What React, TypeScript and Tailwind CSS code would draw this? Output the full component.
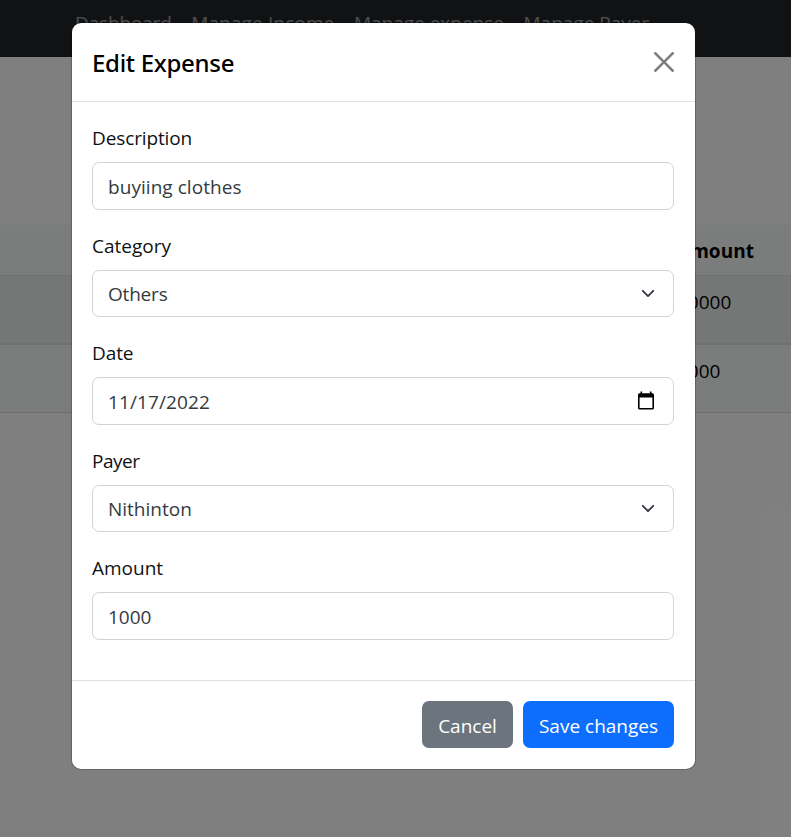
import React from "react";

type FieldProps = {
  label: string;
  labelClass?: string;
  value: string;
  valueClass?: string;
  icon?: React.ReactNode;
};

function ChevronIcon() {
  return (
    <svg className="mr-[3px] h-5 w-[14px]" viewBox="0 0 16 16" fill="none" stroke="#343a40" strokeWidth="2.1" strokeLinecap="round" strokeLinejoin="round">
      <path d="m2 5.500 6 6 6-6" />
    </svg>
  );
}

function CalendarIcon() {
  return (
    <svg className="mr-[4px] h-5 w-4" viewBox="0 0 16 20" fill="#000">
      <path fillRule="evenodd" d="M2.5 .6h1.600v1.600h7.800V.6h1.600v1.600h.9A1.600 1.600 0 0 1 16 3.800v13.200a1.600 1.600 0 0 1-1.600 1.600H1.600A1.600 1.600 0 0 1 0 17V3.800a1.600 1.600 0 0 1 1.600-1.600h.9zM1.600 6.500v10.500h12.800V6.500z" />
    </svg>
  );
}

function Field({ label, labelClass = "", value, valueClass = "", icon }: FieldProps) {
  return (
    <div className="mb-5">
      <div className={`mb-[10px] h-[30px] leading-[32px] text-[#101214] ${labelClass}`}>{label}</div>
      <div className="flex h-[47.5px] items-center justify-between rounded-[7px] border border-[#ced4da] bg-white px-[15px] text-[#343a40]">
        <span className={`pt-[2px] leading-[30px] ${valueClass}`}>{value}</span>
        {icon}
      </div>
    </div>
  );
}

function Page() {
  return (
    <div className="h-[837px] bg-white">
      <nav className="flex h-[57px] gap-[19.5px] bg-[#212529] pl-[75px] pt-[8px] leading-[30px] text-white/55">
        <span className="tracking-[-0.15px]">Dashboard</span>
        <span className="tracking-[0.13px]">Manage Income</span>
        <span>Manage expense</span>
        <span className="tracking-[0px]">Manage Payer</span>
      </nav>
      <div className="pt-[168px] text-black">
        <div className="h-[51px] border-b border-[#dee2e1] bg-[#f7faf9] pl-[677px] pt-[11px] font-bold leading-[30px] tracking-[0.05px]">Amount</div>
        <div className="h-[69px] border-b-2 border-[#dee2e1] bg-[#ebeeed] pl-[677px] pt-[11px] leading-[30px]">10000</div>
        <div className="h-[68px] border-b border-[#d2d5d4] bg-[#f7faf9] pl-[677px] pt-[11px] leading-[30px]">1000</div>
      </div>
    </div>
  );
}

export default function App() {
  return (
    <div className="relative h-[837px] w-[791px] overflow-hidden font-['Open_Sans','Noto_Sans',sans-serif] text-[19px]">
      <Page />
      <div className="absolute inset-0 bg-black/50 pl-[71px] pt-[22px]">
        <div className="w-[625px] overflow-hidden rounded-[10px] border border-black/20 bg-white bg-clip-padding">
          <header className="flex h-[79px] items-center justify-between border-b border-[#dee2e6] pl-5 pr-[21px]">
            <h1 className="font-['Noto_Sans',sans-serif] text-[24px] font-medium leading-[37px] tracking-[-0.3px] text-black">Edit Expense</h1>
            <svg className="h-5 w-5" viewBox="0 0 16 16" fill="#000" fillOpacity=".5">
              <path d="M.293.293a1 1 0 0 1 1.414 0L8 6.586 14.293.293a1 1 0 1 1 1.414 1.414L9.414 8l6.293 6.293a1 1 0 0 1-1.414 1.414L8 9.414l-6.293 6.293a1 1 0 0 1-1.414-1.414L6.586 8 .293 1.707a1 1 0 0 1 0-1.414z" />
            </svg>
          </header>
          <main className="h-[578px] pl-5 pr-[21px] pt-5">
            <Field label="Description" labelClass="tracking-[-0.12px]" value="buyiing clothes" valueClass="tracking-[0.05px]" />
            <Field label="Category" value="Others" valueClass="tracking-[-0.2px]" icon={<ChevronIcon />} />
            <Field label="Date" labelClass="tracking-[-0.1px]" value="11/17/2022" valueClass="tracking-[0.1px]" icon={<CalendarIcon />} />
            <Field label="Payer" labelClass="tracking-[-0.5px]" value="Nithinton" icon={<ChevronIcon />} />
            <Field label="Amount" value="1000" />
          </main>
          <footer className="flex h-[89px] justify-end gap-[10px] border-t border-[#dee2e6] pl-5 pr-[21px] pt-5 text-white">
            <button className="h-[47px] w-[91px] rounded-[7px] bg-[#6c757d] pt-[3px]">Cancel</button>
            <button className="h-[47px] w-[151px] rounded-[7px] bg-[#0d6efd] pt-[3px]">Save changes</button>
          </footer>
        </div>
      </div>
    </div>
  );
}
